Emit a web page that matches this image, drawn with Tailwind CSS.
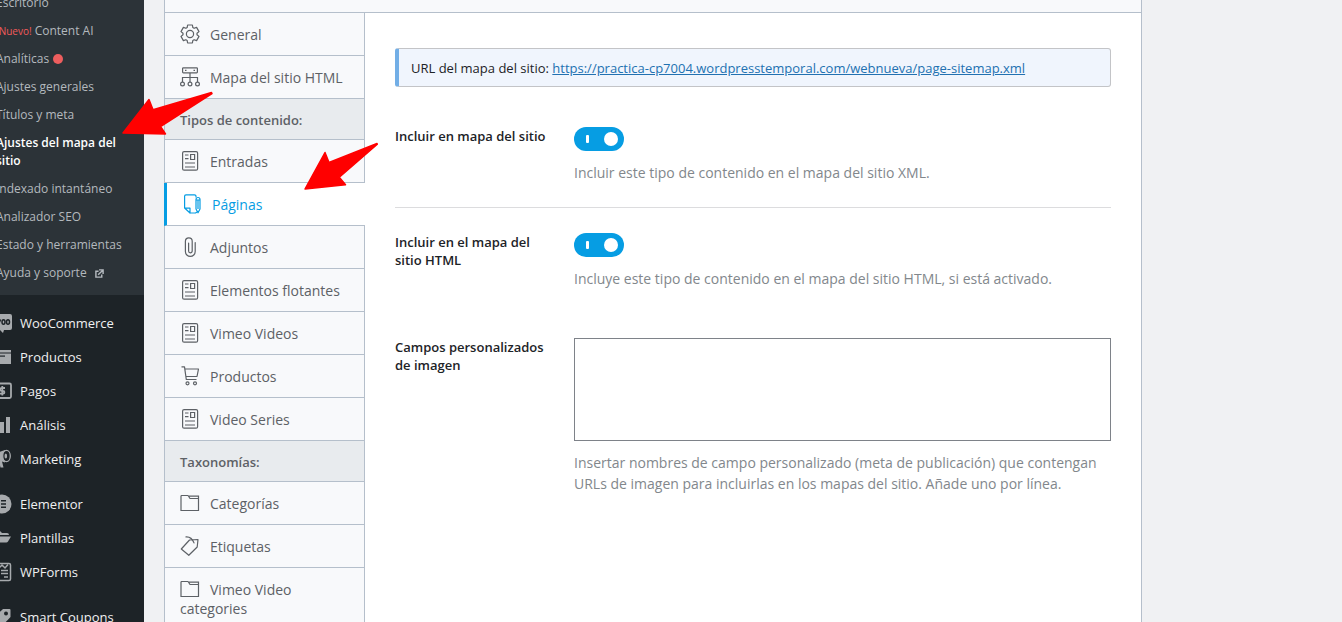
<!DOCTYPE html>
<html lang="es">
<head>
    <meta charset="UTF-8">
    <meta name="viewport" content="width=device-width, initial-scale=1.0">
    <title>Ajustes del mapa del sitio</title>
    <script src="https://cdn.jsdelivr.net/npm/@tailwindcss/browser@4"></script>
</head>
<body class="relative h-screen overflow-hidden bg-[#f0f1f3] font-['Open_Sans','Noto_Sans',sans-serif] text-[13px] text-[#1d2327]">

    <!-- Shared icons -->
    <svg class="hidden">
        <symbol id="icon-doc" viewBox="0 0 20 20">
            <rect x="2.6" y=".6" width="15" height="18.6" rx="1.5"/>
            <path d="M10.6 3.5h4v5h-4zM5 4h3.5M5 7.6h3.5M5 12h10M5 16h10"/>
        </symbol>
        <symbol id="icon-folder" viewBox="0 0 20 20">
            <path d="M1.5 2.5H8l2 3h8.5v12H1V3zM9 3.2h9.5v3"/>
        </symbol>
    </svg>

    <div class="flex h-full">

        <!-- Admin menu -->
        <nav class="-ml-4 h-full w-40 shrink-0 overflow-hidden bg-[#1d2327]">
            <ul class="-mt-[11px] bg-[#2c3338] pb-2 text-[12px] leading-[18px] text-[#b4b9be]">
                <li><a href="#" class="block px-3 py-[5px]">Escritorio</a></li>
                <li><a href="#" class="block px-3 py-[5px]"><span class="text-[10px] text-[#f25a5a]">¡Nuevo!</span> Content AI</a></li>
                <li><a href="#" class="flex items-center gap-1 px-3 py-[5px]">Analíticas <span class="size-[10px] rounded-full bg-[#ed5e5e]"></span></a></li>
                <li><a href="#" class="block px-3 py-[5px]">Ajustes generales</a></li>
                <li><a href="#" class="block px-3 py-[5px]">Títulos y meta</a></li>
                <li><a href="#" class="block px-3 py-[5px] font-semibold text-white">Ajustes del mapa del sitio</a></li>
                <li><a href="#" class="block px-3 py-[5px]">Indexado intantáneo</a></li>
                <li><a href="#" class="block px-3 py-[5px]">Analizador SEO</a></li>
                <li><a href="#" class="block px-3 py-[5px]">Estado y herramientas</a></li>
                <li>
                    <a href="#" class="flex items-center gap-2 px-3 py-[5px]">Ayuda y soporte
                        <svg class="size-[9px]" viewBox="0 0 10 10" fill="none" stroke="currentColor" stroke-width="1.6"><path d="M4 2.5H1v6.5h6.5V6M4.5 1H9v4.5M9 1 3.5 6.5"/></svg>
                    </a>
                </li>
            </ul>
            <ul class="mt-[11px] leading-5 text-[#f0f0f1]">
                <li><a href="#" class="flex items-center gap-2 py-[7px] pl-2">
                    <svg class="size-5 text-[#a7aaad]" viewBox="0 0 20 20" fill="currentColor"><path d="M2 1h16a2 2 0 0 1 2 2v12a2 2 0 0 1-2 2h-6l-1 3-3-3H2a2 2 0 0 1-2-2V3a2 2 0 0 1 2-2z"/><path d="m1.5 6.5 1.500 5 2-4 1.500 4 2-5" fill="none" stroke="#1d2327" stroke-width="1.5"/><ellipse cx="11.5" cy="9" rx="1.5" ry="2.3" fill="none" stroke="#1d2327" stroke-width="1.5"/><ellipse cx="16" cy="9" rx="1.5" ry="2.3" fill="none" stroke="#1d2327" stroke-width="1.5"/></svg>
                    WooCommerce</a></li>
                <li><a href="#" class="flex items-center gap-2 py-[7px] pl-2">
                    <svg class="size-5 text-[#a7aaad]" viewBox="0 0 20 20" fill="currentColor"><path d="M1 3h18v2.5H1zM1 6.5h18V17H1z"/><path d="M7 8.5h6v1.2H7z" fill="#1d2327"/></svg>
                    Productos</a></li>
                <li><a href="#" class="flex items-center gap-2 py-[7px] pl-2">
                    <svg class="size-5 text-[#a7aaad]" viewBox="0 0 20 20" fill="none" stroke="currentColor" stroke-width="1.8"><rect x="1" y="2.5" width="18" height="14.5" rx="1.5"/><path d="M13 7H9.500a1.300 1.300 0 0 0 0 2.800h1.500a1.300 1.300 0 0 1 0 2.800H7.500M10.300 5v9.500"/></svg>
                    Pagos</a></li>
                <li><a href="#" class="flex items-center gap-2 py-[7px] pl-2">
                    <svg class="size-5 text-[#a7aaad]" viewBox="0 0 20 20" fill="currentColor"><path d="M2 10h4v8H2zM8 7h4v11H8zM14 2h4v16h-4z"/></svg>
                    Análisis</a></li>
                <li><a href="#" class="flex items-center gap-2 py-[7px] pl-2">
                    <svg class="size-5 text-[#a7aaad]" viewBox="0 0 20 20" fill="currentColor"><path d="M13 1 2 5v7h5l1.500 6.500h3L10 12.500l3 1z"/><ellipse cx="14.5" cy="7" rx="3.8" ry="5.6" fill="#1d2327" stroke="currentColor" stroke-width="1.3"/><ellipse cx="13.8" cy="7" rx="1.3" ry="2.6"/></svg>
                    Marketing</a></li>
            </ul>
            <ul class="mt-[11px] leading-5 text-[#f0f0f1]">
                <li><a href="#" class="flex items-center gap-2 py-[7px] pl-2">
                    <svg class="size-5 text-[#a7aaad]" viewBox="0 0 20 20" fill="currentColor"><circle cx="10" cy="10" r="9.5"/><path d="M6 6h1.800v8H6zM9 6h5v1.500H9zM9 9.300h5v1.500H9zM9 12.500h5V14H9z" fill="#1d2327"/></svg>
                    Elementor</a></li>
                <li><a href="#" class="flex items-center gap-2 py-[7px] pl-2">
                    <svg class="size-5 text-[#a7aaad]" viewBox="0 0 20 20" fill="currentColor"><path d="M2 3h6l2 2h5a2 2 0 0 1 2 2H4l-2 5zM4.500 8.500H19l-3 5a2 2 0 0 1-1.700 1H2z"/></svg>
                    Plantillas</a></li>
                <li><a href="#" class="flex items-center gap-2 py-[7px] pl-2">
                    <svg class="size-5 text-[#a7aaad]" viewBox="0 0 20 20" fill="none" stroke="currentColor" stroke-width="1.5"><rect x="1.5" y="1.5" width="17" height="17" rx="1.5"/><path d="m5 2 3 3 2-2 3 3 3-3.500M9 8.500h7M9 11.500h7M12 15h4M4 8.500h3M4 11.500h3"/></svg>
                    WPForms</a></li>
            </ul>
            <ul class="mt-[11px] leading-5 text-[#f0f0f1]">
                <li><a href="#" class="flex items-center gap-2 py-[7px] pl-2">
                    <svg class="size-5 text-[#a7aaad]" viewBox="0 0 20 20" fill="currentColor"><path d="M11 2h6.500a1 1 0 0 1 1 1v7L10 19l-8.500-8z"/><circle cx="14" cy="6.5" r="2" fill="#1d2327"/></svg>
                    Smart Coupons</a></li>
            </ul>
        </nav>

        <!-- Settings panel -->
        <main class="mr-[200px] ml-5 flex min-w-0 flex-1 flex-col border-x border-[#b5bfcb] bg-white">
            <div class="h-[13px] shrink-0 border-b border-[#b5bfcb] bg-[#f8f9fb]"></div>
            <div class="flex min-h-0 flex-1">

                <!-- Tabs -->
                <nav class="w-[200px] shrink-0 text-sm leading-[19px] text-[#5d6166]">
                    <a href="#" class="block border-r border-b border-[#b5bfcb] bg-[#f8f9fb] pt-3 pr-4 pb-[11px] pl-[15px]"><svg class="-my-1 mr-[10px] inline size-5 align-baseline" viewBox="0 0 20 20" fill="none" stroke="currentColor" stroke-width="1.2" stroke-linejoin="round"><path d="M7.600 1h4.800l.450 2.600 1.250.700 2.500-.900L19 7.600l-2 1.700v1.400l2 1.700-2.400 4.200-2.500-.900-1.250.700L12.400 19H7.600l-.450-2.600-1.250-.700-2.500.900L1 12.400l2-1.700V9.300L1 7.600l2.400-4.200 2.500.900 1.250-.700z"/><circle cx="10" cy="10" r="3.6"/></svg>General</a>
                    <a href="#" class="block border-r border-b border-[#b5bfcb] bg-[#f8f9fb] pt-3 pr-4 pb-[11px] pl-[15px]"><svg class="-my-1 mr-[10px] inline size-5 align-baseline" viewBox="0 0 20 20" fill="none" stroke="currentColor" stroke-width="1.2"><rect x="2.6" y=".8" width="14.8" height="5" rx=".8"/><path d="M5 3.300h1.500M13.500 3.300H15M10 6v9M2.500 15v-4.500h15V15"/><circle cx="2.5" cy="17" r="1.9"/><circle cx="10" cy="17" r="1.9"/><circle cx="17.5" cy="17" r="1.9"/></svg>Mapa del sitio HTML</a>
                    <h2 class="border-r border-b border-[#b5bfcb] bg-[#e8ebee] pt-3 pb-[10px] pl-[15px] text-[13px] leading-[18px] font-semibold">Tipos de contenido:</h2>
                    <a href="#" class="block border-r border-b border-[#b5bfcb] bg-[#f8f9fb] pt-3 pr-4 pb-[11px] pl-[15px]"><svg class="-my-1 mr-[10px] inline size-5 align-baseline" fill="none" stroke="currentColor" stroke-width="1.2"><use href="#icon-doc"/></svg>Entradas</a>
                    <a href="#" class="-ml-px block border-b border-l-3 border-b-[#b5bfcb] border-l-[#069de3] bg-white pt-3 pr-4 pb-[11px] pl-[15px] text-[#069de3]"><svg class="-my-1 mr-[10px] inline size-5 align-baseline" viewBox="0 0 20 20" fill="none" stroke="currentColor" stroke-width="1.2" stroke-linejoin="round"><path d="M14 3.500V2.300A1.500 1.500 0 0 0 12.500.8H4A1.500 1.500 0 0 0 2.600 2.300V14l5.400 5V14.200H2.600M8 19h5.500l1.500-1"/><path d="M14 5.500a2 2 0 0 1 4 0V15l-2 3.800-2-3.800zM14 6h4M16 6v9"/></svg>Páginas</a>
                    <a href="#" class="block border-r border-b border-[#b5bfcb] bg-[#f8f9fb] pt-3 pr-4 pb-[11px] pl-[15px]"><svg class="-my-1 mr-[10px] inline size-5 align-baseline" viewBox="0 0 20 20" fill="none" stroke="currentColor" stroke-width="1.2" stroke-linecap="round"><path d="M15.200 5.500v9a4.900 4.900 0 0 1-9.800 0V4.300a3.400 3.400 0 0 1 6.800 0V14a1.800 1.800 0 0 1-3.600 0V6"/></svg>Adjuntos</a>
                    <a href="#" class="block border-r border-b border-[#b5bfcb] bg-[#f8f9fb] pt-3 pr-4 pb-[11px] pl-[15px]"><svg class="-my-1 mr-[10px] inline size-5 align-baseline" fill="none" stroke="currentColor" stroke-width="1.2"><use href="#icon-doc"/></svg>Elementos flotantes</a>
                    <a href="#" class="block border-r border-b border-[#b5bfcb] bg-[#f8f9fb] pt-3 pr-4 pb-[11px] pl-[15px]"><svg class="-my-1 mr-[10px] inline size-5 align-baseline" fill="none" stroke="currentColor" stroke-width="1.2"><use href="#icon-doc"/></svg>Vimeo Videos</a>
                    <a href="#" class="block border-r border-b border-[#b5bfcb] bg-[#f8f9fb] pt-3 pr-4 pb-[11px] pl-[15px]"><svg class="-my-1 mr-[10px] inline size-5 align-baseline" viewBox="0 0 20 20" fill="none" stroke="currentColor" stroke-width="1.2" stroke-linejoin="round"><path d="M1.500.8h3L6.300 13.500h10.200M4.900 3h13.600L17 10.500H6"/><circle cx="7.5" cy="17.3" r="1.5"/><circle cx="15" cy="17.3" r="1.5"/></svg>Productos</a>
                    <a href="#" class="block border-r border-b border-[#b5bfcb] bg-[#f8f9fb] pt-3 pr-4 pb-[11px] pl-[15px]"><svg class="-my-1 mr-[10px] inline size-5 align-baseline" fill="none" stroke="currentColor" stroke-width="1.2"><use href="#icon-doc"/></svg>Video Series</a>
                    <h2 class="border-r border-b border-[#b5bfcb] bg-[#e8ebee] pt-3 pb-[10px] pl-[15px] text-[13px] leading-[18px] font-semibold">Taxonomías:</h2>
                    <a href="#" class="block border-r border-b border-[#b5bfcb] bg-[#f8f9fb] pt-3 pr-4 pb-[11px] pl-[15px]"><svg class="-my-1 mr-[10px] inline size-5 align-baseline" fill="none" stroke="currentColor" stroke-width="1.2"><use href="#icon-folder"/></svg>Categorías</a>
                    <a href="#" class="block border-r border-b border-[#b5bfcb] bg-[#f8f9fb] pt-3 pr-4 pb-[11px] pl-[15px]"><svg class="-my-1 mr-[10px] inline size-5 align-baseline" viewBox="0 0 20 20" fill="none" stroke="currentColor" stroke-width="1.2" stroke-linejoin="round"><path d="m1.300 13 8.200-9 8.500-.500-.800 7.500-8.400 8.300z"/><path d="M6 .9q5.500-.4 8 6" stroke-linecap="round"/></svg>Etiquetas</a>
                    <a href="#" class="block border-r border-b border-[#b5bfcb] bg-[#f8f9fb] pt-3 pr-4 pb-[11px] pl-[15px]"><svg class="-my-1 mr-[10px] inline size-5 align-baseline" fill="none" stroke="currentColor" stroke-width="1.2"><use href="#icon-folder"/></svg>Vimeo Video categories</a>
                </nav>

                <!-- Tab content -->
                <form class="min-w-0 flex-1 px-[30px] pt-[35px]">
                    <p class="rounded-[3px] border border-l-4 border-[#c3c4c7] border-l-[#72aee6] bg-[#f0f5fd] px-3 pt-[9px] pb-[7px] leading-[21px]">
                        URL del mapa del sitio: <a href="#" class="text-[#2271b1] underline">https://practica-cp7004.wordpresstemporal.com/webnueva/page-sitemap.xml</a>
                    </p>

                    <div class="flex gap-[19px] border-b border-[#dcdcde] pt-10 pb-6">
                        <label for="include-sitemap" class="w-40 shrink-0 leading-[18px] font-semibold">Incluir en mapa del sitio</label>
                        <div class="flex-1">
                            <input type="checkbox" id="include-sitemap" checked class="flex h-6 w-[50px] appearance-none items-center justify-between rounded-full bg-[#069de3] pr-[6px] pl-3 before:h-2 before:w-[3px] before:rounded-[1px] before:bg-white after:size-[14px] after:rounded-full after:bg-white">
                            <p class="mt-[11px] text-sm leading-[21px] text-[#82878c]">Incluir este tipo de contenido en el mapa del sitio XML.</p>
                        </div>
                    </div>

                    <div class="flex gap-[19px] pt-[25px] pb-6">
                        <label for="include-html" class="w-40 shrink-0 leading-[18px] font-semibold">Incluir en el mapa del sitio HTML</label>
                        <div class="flex-1">
                            <input type="checkbox" id="include-html" checked class="flex h-6 w-[50px] appearance-none items-center justify-between rounded-full bg-[#069de3] pr-[6px] pl-3 before:h-2 before:w-[3px] before:rounded-[1px] before:bg-white after:size-[14px] after:rounded-full after:bg-white">
                            <p class="mt-[11px] text-sm leading-[21px] text-[#82878c]">Incluye este tipo de contenido en el mapa del sitio HTML, si está activado.</p>
                        </div>
                    </div>

                    <div class="flex gap-[19px] pt-[25px]">
                        <label for="image-fields" class="w-40 shrink-0 leading-[18px] font-semibold">Campos personalizados de imagen</label>
                        <div class="flex-1">
                            <textarea id="image-fields" class="block h-[103px] w-full resize-none border border-[#7e8289] bg-white p-2"></textarea>
                            <p class="mt-[11px] text-sm leading-[21px] text-[#82878c]">Insertar nombres de campo personalizado (meta de publicación) que contengan URLs de imagen para incluirlas en los mapas del sitio. Añade uno por línea.</p>
                        </div>
                    </div>
                </form>
            </div>
        </main>
    </div>

    <!-- Red arrows over the page -->
    <svg class="pointer-events-none absolute top-[90px] left-[120px] h-[102px] w-[260px]" viewBox="120 90 260 102" fill="#f00" stroke="#f00" stroke-linejoin="round" stroke-width="1.5">
        <path d="M123 133l26-33.500 4 10.300 58.500-17.300.5 1-51.500 33 5 7.500z"/>
        <path d="M305 189l20-36.500 4 10 48-19 .3.800-38 33 6.200 7.500z"/>
    </svg>
</body>
</html>
